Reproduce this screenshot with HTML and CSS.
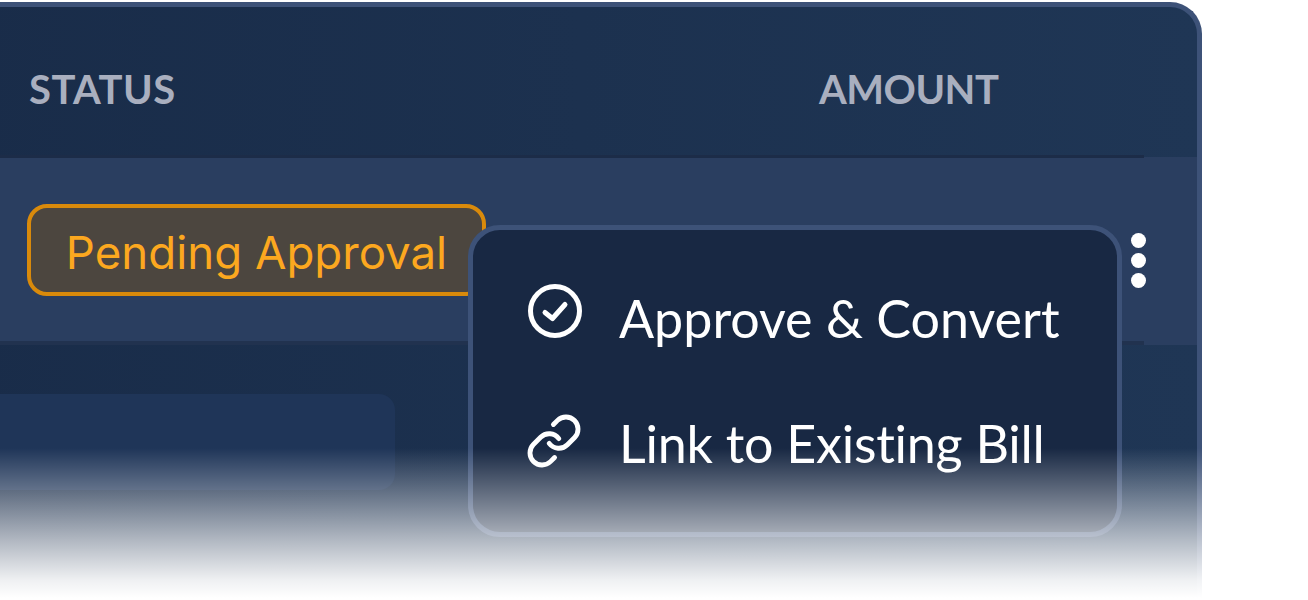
FILE: index.html
```html
<!DOCTYPE html>
<html lang="en">
<head>
<meta charset="utf-8">
<title>Bills</title>
<link rel="stylesheet" href="styles.css">
</head>
<body>
<div class="stage">
  <div class="panel">
    <div class="head">
      <div class="th th-status">STATUS</div>
      <div class="th th-amount">AMOUNT</div>
    </div>
    <div class="row">
      <div class="row-main">
        <span class="pill">Pending Approval</span>
      </div>
      <div class="row-action">
        <div class="dots"><i></i><i></i><i></i></div>
      </div>
    </div>
    <div class="skeleton"></div>
    <div class="menu">
      <div class="item">
        <svg class="icon icon-check" viewBox="0 0 56 56" fill="none" stroke="currentColor" stroke-width="5" stroke-linecap="round" stroke-linejoin="round"><circle cx="28" cy="28" r="24.5"/><path d="M18 29.5l7.5 6L38 21.5"/></svg>
        <span>Approve &amp; Convert</span>
      </div>
      <div class="item">
        <svg class="icon icon-link" viewBox="0 0 24 24" fill="none" stroke="currentColor" stroke-width="2" stroke-linecap="round" stroke-linejoin="round"><path d="M10 13a5 5 0 0 0 7.54.54l3-3a5 5 0 0 0-7.07-7.07l-1.72 1.71"/><path d="M14 11a5 5 0 0 0-7.54-.54l-3 3a5 5 0 0 0 7.07 7.07l1.71-1.71"/></svg>
        <span class="item-link-text">Link to Existing Bill</span>
      </div>
    </div>
  </div>
  <div class="fade"></div>
</div>
</body>
</html>
```
FILE: styles.css
```css
* { box-sizing: border-box; }
html, body { margin: 0; background: #fff; }
.stage {
  position: relative;
  width: 1308px;
  height: 600px;
  overflow: hidden;
}
.panel {
  position: relative;
  width: 1242px;
  height: 598px;
  margin: 2px 0 0 -40px;
  border: 5px solid #3d5278;
  border-bottom: 0;
  border-radius: 32px 32px 0 0;
  overflow: hidden;
  background: linear-gradient(90deg, #192c49 0%, #1f3655 100%);
  font-family: Lato, sans-serif;
}
.head {
  display: flex;
  height: 150px;
  padding: 14px 0 0 64px;
  align-items: center;
  font-weight: 700;
  font-size: 40px;
  color: #a9afbf;
}
.th-status { width: 790px; letter-spacing: 0.5px; }
.th-amount { letter-spacing: -0.5px; }
.row { display: flex; height: 188px; }
.row-main {
  flex: 1;
  height: 190px;
  margin-top: -2px;
  background: #2a3e60;
  border-top: 3px solid #1c2c48;
  border-bottom: 4px solid #21324f;
  display: flex;
  align-items: center;
  padding-left: 62px;
}
.row-action { width: 53px; background: #2a3e60; position: relative; }
.pill {
  display: block;
  width: 459px;
  height: 92px;
  border: 4px solid #d98a0b;
  border-radius: 20px;
  background: #4c463f;
  color: #fca81f;
  font: 400 45.6px/89px Inter, sans-serif;
  text-align: center;
}
.dots {
  position: absolute;
  left: -13px;
  top: 76px;
  display: flex;
  flex-direction: column;
  gap: 5px;
}
.dots i { display: block; width: 15px; height: 15px; border-radius: 50%; background: #fff; }
.skeleton {
  width: 430px;
  height: 96px;
  margin-top: 49px;
  background: #1f3558;
  border-radius: 0 16px 16px 0;
}
.menu {
  position: absolute;
  left: 503px;
  top: 218px;
  width: 654px;
  height: 312px;
  border: 5px solid #3d5278;
  border-radius: 32px;
  background: #182843;
  color: #fff;
  font-size: 52px;
  font-variant-ligatures: none;
  padding: 25px 0 0 52px;
}
.item { display: flex; align-items: center; height: 125px; gap: 38px; }
.item-link-text { letter-spacing: -0.25px; }
.icon { flex: none; width: 56px; height: 56px; }
.icon-check { margin: 0 -2px 14px 2px; }
.icon-link { width: 58px; height: 58px; margin: 0 -2px 4px 0; }
.fade {
  position: absolute;
  left: 0;
  right: 0;
  top: 448px;
  height: 152px;
  background: linear-gradient(180deg, rgba(255,255,255,0) 0, rgba(255,255,255,0.3) 42px, rgba(255,255,255,0.66) 92px, rgba(255,255,255,0.93) 132px, #fff 150px);
}
```
